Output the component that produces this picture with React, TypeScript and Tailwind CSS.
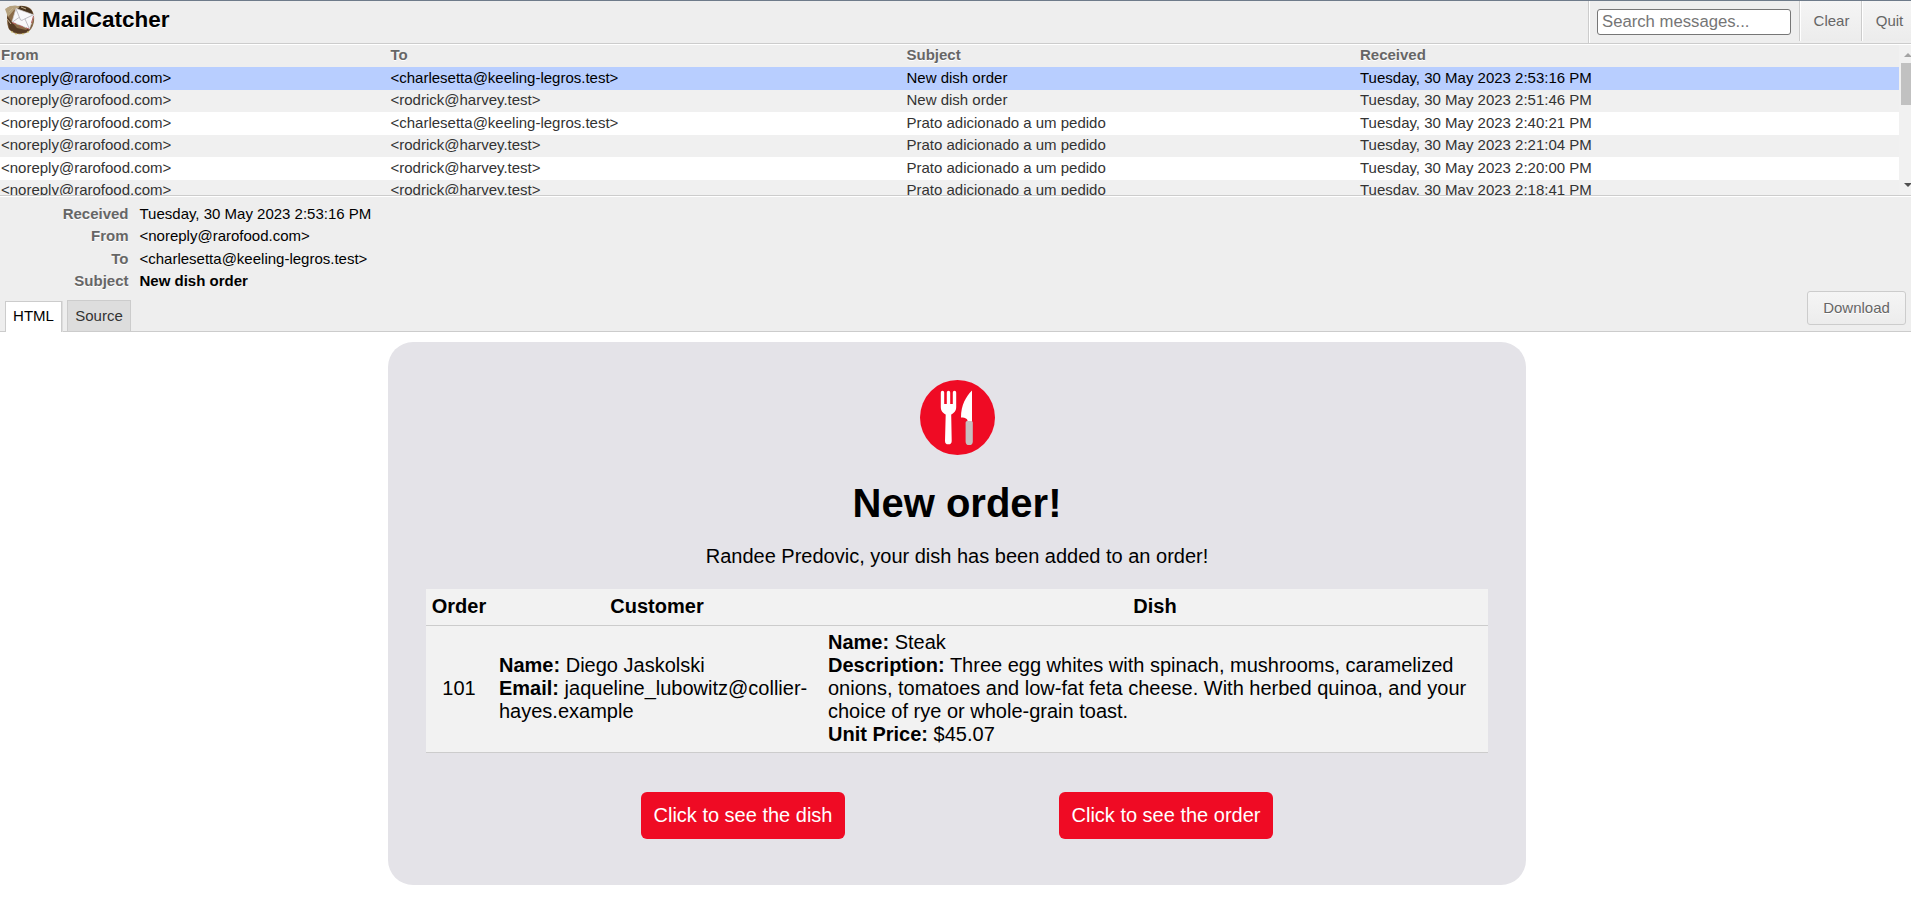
import React from "react";

const messages = [
  ["<noreply@rarofood.com>", "<charlesetta@keeling-legros.test>", "New dish order", "Tuesday, 30 May 2023 2:53:16 PM", "h-[23px] leading-[22px] bg-[#b8ceff] text-black"],
  ["<noreply@rarofood.com>", "<rodrick@harvey.test>", "New dish order", "Tuesday, 30 May 2023 2:51:46 PM", "h-[22px] leading-[20px] bg-[#f0f0f0]"],
  ["<noreply@rarofood.com>", "<charlesetta@keeling-legros.test>", "Prato adicionado a um pedido", "Tuesday, 30 May 2023 2:40:21 PM", "h-[23px] leading-[22px] bg-white"],
  ["<noreply@rarofood.com>", "<rodrick@harvey.test>", "Prato adicionado a um pedido", "Tuesday, 30 May 2023 2:21:04 PM", "h-[22px] leading-[20px] bg-[#f0f0f0]"],
  ["<noreply@rarofood.com>", "<rodrick@harvey.test>", "Prato adicionado a um pedido", "Tuesday, 30 May 2023 2:20:00 PM", "h-[23px] leading-[22px] bg-white"],
  ["<noreply@rarofood.com>", "<rodrick@harvey.test>", "Prato adicionado a um pedido", "Tuesday, 30 May 2023 2:18:41 PM", "h-[22px] leading-[20px] bg-[#f0f0f0]"],
];

const details = [
  ["Received", "Tuesday, 30 May 2023 2:53:16 PM", "h-[22px]"],
  ["From", "<noreply@rarofood.com>", "h-[23px]"],
  ["To", "<charlesetta@keeling-legros.test>", "h-[22px]"],
  ["Subject", "New dish order", "h-[23px] font-bold"],
];

const columns = "grid grid-cols-[389.5px_516px_453.5px_1fr] pl-px whitespace-nowrap";

function Logo() {
  return (
    <svg className="ml-[4px] mt-[4px] h-[32px] w-[32px] shrink-0" viewBox="0 0 32 32">
      <path d="M3 3Q8 0 14 1Q22 0 27 4Q31 9 30 17Q28 26 22 28Q14 31 8 27Q3 24 3 15Z" fill="#8a6b48" />
      <path d="M1 4L6 1Q12 0 17 2L10 5L4 12Z" fill="#b6a27e" />
      <path d="M3 11L8 17L13 23L22 25L28 20Q25 28 19 28Q10 29 5 24Z" fill="#553b25" />
      <path d="M16 1Q24 1 28 6L29 10L24 8L14 4Z" fill="#49351f" />
      <path d="M3 14L7 19M5 7L9 3M17 2L22 4" stroke="#c5b18d" strokeWidth="1" fill="none" />
      <path d="M12 3.500L30 10L25.500 24L8 17Z" fill="#f8f8fa" stroke="#d3ced1" strokeWidth=".7" />
      <path d="M12 4L16.500 15Q18 16 19.500 14.500L29 10M8.500 17L15 12.500M25 23L21 14" fill="none" stroke="#b8b6bc" strokeWidth=".9" />
      <path d="M8 17.500L12 19M15 20.500L19 22M22 23L25 24M29.500 11L27.500 18" stroke="#b65f5c" strokeWidth="1" />
      <path d="M7 27h2M11 29h2M18 29h2M23 27h2" stroke="#d9cf78" strokeWidth="1.2" />
    </svg>
  );
}

function Cutlery() {
  return (
    <svg className="mx-auto block h-[75px] w-[75px]" viewBox="0 0 75 75">
      <circle cx="37.5" cy="37.5" r="37.5" fill="#ef0b24" />
      <path d="M20.8 12.4a1.7 1.7 0 0 1 3.4 0V24h2.6V12.4a1.7 1.7 0 0 1 3.4 0V24h2.6V12.4a1.7 1.7 0 0 1 3.4 0V27c0 4-2.2 6.2-5 7.4L31.7 61a3.3 3.3 0 0 1-6.7 0L25.7 34.4c-2.7-1.2-4.9-3.4-4.9-7.4Z" fill="#fff" />
      <path d="M52 10.5V42H47.500C48 39 46 37.500 41 37.500C41 25 46 16.500 52 10.500Z" fill="#fff" />
      <path d="M45.600 42.500q0-1.500 1.500-1.500h4.200q1.500 0 1.500 1.500V61.400a3.600 3.600 0 0 1-7.200 0Z" fill="#c6bfc0" />
    </svg>
  );
}

export default function App() {
  return (
    <div className="flex h-[918px] w-full flex-col overflow-hidden bg-white font-['Liberation_Sans',Arial,sans-serif] text-[15px] text-black">
      <header className="flex h-[44px] shrink-0 justify-between border-t border-b border-t-[#6e7b8a] border-b-[#ccc] bg-[#eee]">
        <div className="flex">
          <Logo />
          <h1 className="ml-[6px] pt-px text-[22.5px] leading-[36px] font-bold [text-shadow:0_1px_0_white]">MailCatcher</h1>
        </div>
        <nav className="flex text-[#666] [text-shadow:0_1px_0_white]">
          <div className="w-[211px] border-l border-[#ccc] pt-[8px] pl-[8px] shadow-[inset_1px_0_0_white]">
            <input className="block h-[26px] w-[194px] rounded-[3px] border border-[#767676] bg-white px-[4px] text-[16.7px] placeholder:text-[#757575]" placeholder="Search messages..." />
          </div>
          <button className="h-[40px] w-[62px] border-l border-[#ccc] bg-linear-to-b from-[#f5f5f5] to-[#ececec] pt-px pl-[2px] shadow-[inset_1px_0_0_white]">Clear</button>
          <button className="h-[40px] w-[50px] border-l border-[#ccc] bg-linear-to-b from-[#f5f5f5] to-[#ececec] pt-px pl-[6px] shadow-[inset_1px_0_0_white]">Quit</button>
        </nav>
      </header>

      <section className="flex h-[152px] shrink-0 overflow-hidden border-t border-b border-t-white border-b-[#ccc] bg-[#eee]">
        <div className="w-[1899px] shrink-0 text-[#333]">
          <div className={columns + " h-[22px] leading-[20px] font-bold text-[#666] [text-shadow:0_1px_0_white]"}>
            <span>From</span><span>To</span><span>Subject</span><span>Received</span>
          </div>
          {messages.map(([from, to, subject, received, tone]) => (
            <div key={received} className={columns + " " + tone}>
              <span>{from}</span><span>{to}</span><span>{subject}</span><span>{received}</span>
            </div>
          ))}
        </div>
        <div className="flex w-[12px] flex-col items-end justify-between bg-[#f1f1f1] pt-[8px] pb-[8px]">
          <svg className="h-[4px] w-[7px]" viewBox="0 0 7 4"><path d="M0 4L4 0L7 3V4Z" fill="#a3a3a3" /></svg>
          <div className="mt-[6px] mb-auto h-[42px] w-[10px] bg-[#c1c1c1]" />
          <svg className="h-[4px] w-[7px]" viewBox="0 0 7 4"><path d="M0 0H7V1L4 4Z" fill="#505050" /></svg>
        </div>
      </section>

      <section className="flex h-[136px] shrink-0 flex-col border-t border-b border-t-white border-b-[#ccc] bg-[#eee]">
        <div className="h-[103px] pt-[6px]">
          {details.map(([label, value, style]) => (
            <div key={label} className={"flex gap-[11px] leading-[22px] " + style}>
              <span className="w-[128.5px] text-right font-bold text-[#666] [text-shadow:0_1px_0_white]">{label}</span>
              <span>{value}</span>
            </div>
          ))}
        </div>
        <div className="flex h-[31px] items-end pr-[5px] pl-[5px]">
          <div className="-mb-px h-[31px] w-[57px] border border-b-0 border-[#ccc] bg-white pt-[3px] text-center leading-[22px] shadow-[1px_0_0_#ddd]">HTML</div>
          <div className="ml-[5px] h-[31px] w-[64px] border border-b-0 border-[#ccc] bg-[#ddd] pt-[4px] text-center leading-[22px] text-[#333]">Source</div>
          <button className="mb-[6px] ml-auto h-[34px] w-[99px] rounded-[3px] border border-[#ccc] bg-linear-to-b from-[#f5f5f5] to-[#ececec] text-[#666] [text-shadow:0_1px_0_white]">Download</button>
        </div>
      </section>

      <main className="ml-[388px] mt-[10px] h-[543px] w-[1138px] shrink-0 rounded-[25px] bg-[#e4e3e8] px-[38px] pt-[38px] text-[20px] leading-[23px]">
        <Cutlery />
        <h2 className="mt-[25px] text-center text-[40px] leading-[46px] font-bold">New order!</h2>
        <p className="mt-[19px] mb-[21px] text-center">Randee Predovic, your dish has been added to an order!</p>
        <div className="h-[164px] bg-[#f2f2f2]">
          <div className="grid h-[37px] grid-cols-[66px_330px_666px] items-center border-b border-[#ccc] pb-[2px] text-center font-bold">
            <span>Order</span><span>Customer</span><span>Dish</span>
          </div>
          <div className="grid h-[127px] grid-cols-[66px_329px_667px] items-center border-b border-[#ccc] pb-[2px]">
            <div className="text-center">101</div>
            <div className="pl-[7px]"><b>Name:</b> Diego Jaskolski<br /><b>Email:</b> jaqueline_lubowitz@collier-<br />hayes.example</div>
            <div className="pl-[7px]"><b>Name:</b> Steak<br /><b>Description:</b> Three egg whites with spinach, mushrooms, caramelized<br />onions, tomatoes and low-fat feta cheese. With herbed quinoa, and your<br />choice of rye or whole-grain toast.<br /><b>Unit Price:</b> $45.07</div>
          </div>
        </div>
        <div className="mt-[39px] flex pl-[215px] text-white">
          <button className="h-[47px] w-[204px] rounded-[6px] bg-[#ef0b24]">Click to see the dish</button>
          <button className="ml-[214px] h-[47px] w-[214px] rounded-[6px] bg-[#ef0b24]">Click to see the order</button>
        </div>
      </main>
    </div>
  );
}
